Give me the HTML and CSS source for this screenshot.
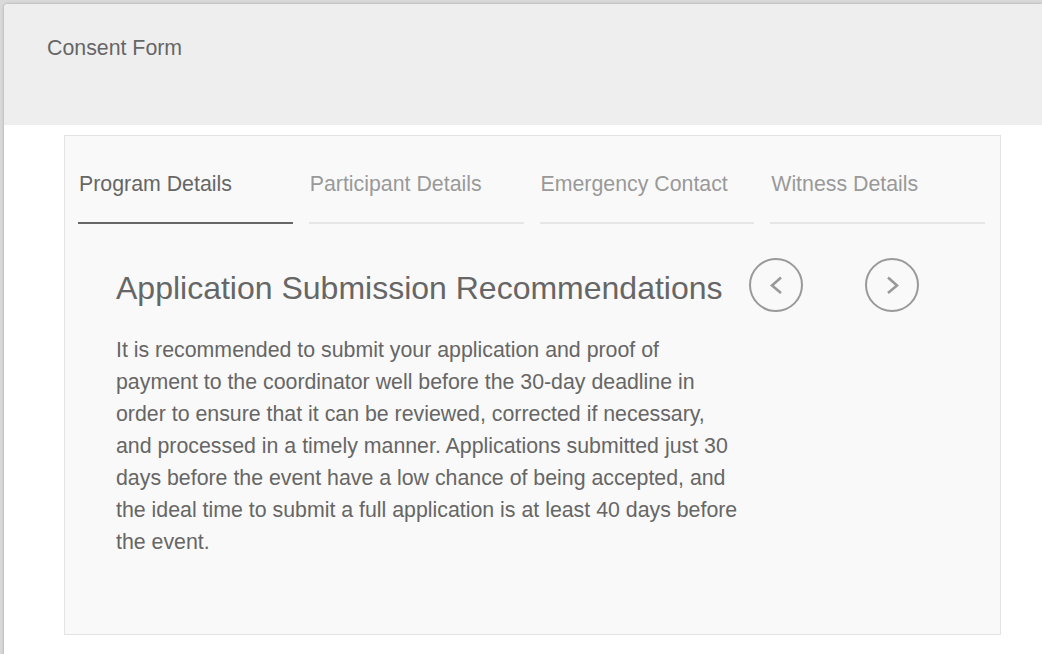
FILE: index.html
```html
<!DOCTYPE html>
<html lang="en">
<head>
<meta charset="utf-8">
<title>Consent Form</title>
<link rel="stylesheet" href="styles.css">
</head>
<body>
<div class="card">
  <header class="card-header">
    <h1 class="title">Consent Form</h1>
  </header>
  <section class="panel">
    <nav class="tabs">
      <div class="tab active">Program Details</div>
      <div class="tab">Participant Details</div>
      <div class="tab">Emergency Contact</div>
      <div class="tab">Witness Details</div>
    </nav>
    <div class="content">
      <div class="text">
        <h2 class="heading">Application Submission Recommendations</h2>
        <p class="body">It is recommended to submit your application and proof of payment to the coordinator well before the 30-day deadline in order to ensure that it can be reviewed, corrected if necessary, and processed in a timely manner. Applications submitted just 30 days before the event have a low chance of being accepted, and the ideal time to submit a full application is at least 40 days before the event.</p>
      </div>
      <div class="nav">
        <button class="circle" aria-label="Previous">
          <svg width="20" height="20" viewBox="0 0 20 20"><path d="M15 2.5 L6 10.5 L15 18" fill="none" stroke="#999" stroke-width="2.6"/></svg>
        </button>
        <button class="circle" aria-label="Next">
          <svg width="20" height="20" viewBox="0 0 20 20"><path d="M6 2.5 L15 10.5 L6 18" fill="none" stroke="#999" stroke-width="2.6"/></svg>
        </button>
      </div>
    </div>
  </section>
</div>
</body>
</html>
```

FILE: styles.css
```css
html, body {
  margin: 0;
  padding: 0;
  height: 100%;
}
body {
  background: #d9d9d9;
  font-family: "Liberation Sans", Arial, sans-serif;
  overflow: hidden;
}
.card {
  margin: 4px 0 0 4px;
  background: #fff;
  border-radius: 4px 0 0 0;
  box-shadow: 0 0 3px rgba(0, 0, 0, 0.25);
  min-height: 660px;
  overflow: hidden;
}
.card-header {
  background: #eeeeee;
  height: 121px;
  padding: 32px 0 0 43px;
  box-sizing: border-box;
}
.title {
  margin: 0;
  font-size: 21.33px;
  line-height: 24px;
  font-weight: normal;
  color: #666;
}
.panel {
  margin: 10px 0 0 60px;
  width: 937px;
  box-sizing: border-box;
  background: #f9f9f9;
  border: 1px solid #e3e3e3;
}
.tabs {
  display: grid;
  grid-template-columns: repeat(4, 1fr);
  gap: 16px;
  padding: 0 15px 0 13px;
}
.tab {
  padding: 36px 0 26px 1px;
  font-size: 21.33px;
  line-height: 24px;
  color: #999;
  border-bottom: 2px solid #e6e6e6;
  white-space: nowrap;
}
.tab.active {
  color: #666;
  border-bottom-color: #666;
}
.content {
  display: flex;
  align-items: flex-start;
  padding: 45px 0 76px 51px;
}
.text {
  width: 627px;
  flex: none;
}
.heading {
  margin: 0;
  font-size: 32px;
  line-height: 38px;
  font-weight: normal;
  color: #666;
  white-space: nowrap;
}
.body {
  margin: 27px 0 0;
  font-size: 21.33px;
  line-height: 32px;
  color: #666;
}
.nav {
  display: flex;
  gap: 62px;
  margin: -11px 0 0 6px;
}
.circle {
  width: 54px;
  height: 54px;
  border-radius: 50%;
  border: 2px solid #999;
  background: transparent;
  padding: 0;
  display: flex;
  align-items: center;
  justify-content: center;
}
```
